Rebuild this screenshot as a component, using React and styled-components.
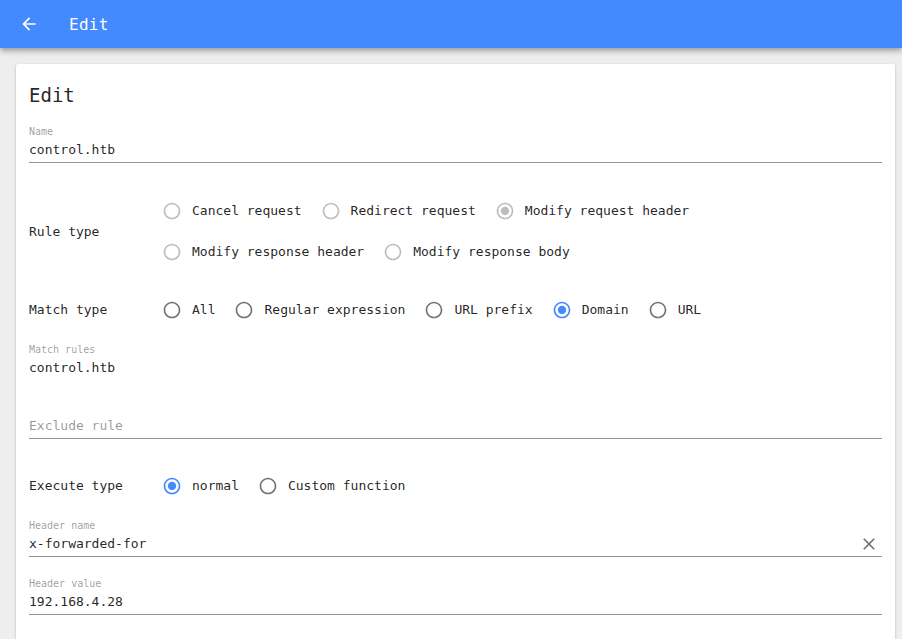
import React from 'react'
import styled, { createGlobalStyle } from 'styled-components'

const GlobalStyle = createGlobalStyle`
    body {
        margin: 0;
        background: #eeeeee;
        font-family: "DejaVu Sans Mono", "Liberation Mono", monospace;
        color: rgba(0, 0, 0, 0.87);
    }
`

const AppBar = styled.header`
    height: 48px;
    background: #448aff;
    display: flex;
    align-items: center;
    padding-left: 19px;
    box-shadow: 0 2px 4px -1px rgba(0,0,0,0.2), 0 4px 5px 0 rgba(0,0,0,0.14), 0 1px 10px 0 rgba(0,0,0,0.12);
    position: relative;
    z-index: 1;
`

const BackButton = styled.button`
    width: 20px;
    height: 20px;
    padding: 0;
    border: 0;
    background: none;
    display: flex;
    color: #fff;
    cursor: pointer;
`

const BarTitle = styled.h1`
    margin: 0 0 0 30px;
    font-size: 16px;
    font-weight: normal;
    color: #fff;
    letter-spacing: 0.3px;
`

const Card = styled.main`
    margin: 16px 7px 0 16px;
    padding: 19px 13px 40px;
    background: #fff;
    border-radius: 2px;
    box-shadow: 0 1px 3px 0 rgba(0,0,0,0.2), 0 1px 1px 0 rgba(0,0,0,0.14), 0 2px 1px -1px rgba(0,0,0,0.12);
    display: flex;
    flex-direction: column;
`

const Title = styled.h2`
    margin: 0;
    font-size: 19px;
    line-height: 24px;
    font-weight: normal;
`

const Field = styled.div`
    margin-top: ${p => p.$top}px;
    display: flex;
    flex-direction: column;
`

const FieldLabel = styled.label`
    font-size: 10px;
    line-height: 12px;
    color: rgba(0, 0, 0, 0.4);
`

const InputRow = styled.div`
    margin-top: ${p => (p.$noLabel ? 0 : 3)}px;
    padding-bottom: ${p => (p.$line ? 3 : 0)}px;
    border-bottom: ${p => (p.$line ? '1px solid rgba(0,0,0,0.42)' : '0')};
    display: flex;
    align-items: center;
`

const Value = styled.span`
    flex: 1;
    font-size: 13px;
    line-height: 18px;
    color: ${p => (p.$placeholder ? 'rgba(0,0,0,0.42)' : 'rgba(0,0,0,0.87)')};
`

const ClearButton = styled.button`
    width: 20px;
    height: 18px;
    padding: 0;
    margin-right: 3px;
    border: 0;
    background: none;
    display: flex;
    align-items: center;
    color: rgba(0, 0, 0, 0.54);
`

const RadioSection = styled.div`
    margin-top: ${p => p.$top}px;
    display: flex;
    align-items: center;
`

const SectionLabel = styled.div`
    width: 133px;
    flex: none;
    font-size: 13px;
`

const RadioRows = styled.div`
    display: flex;
    flex-direction: column;
`

const RadioRow = styled.div`
    height: 41px;
    display: flex;
    align-items: center;
    gap: 19px;
`

const RadioItem = styled.label`
    display: flex;
    align-items: center;
    gap: 10px;
    font-size: 13px;
    color: rgba(0, 0, 0, 0.87);
`

const RadioIcon = styled.svg`
    width: 20px;
    height: 20px;
    flex: none;
    fill: ${p => (p.$disabled ? 'rgba(0,0,0,0.26)' : p.$checked ? '#448aff' : 'rgba(0,0,0,0.54)')};
`

const Radio = ({ label, checked, disabled }) => (
    <RadioItem>
        <RadioIcon viewBox="0 0 24 24" $checked={checked} $disabled={disabled}>
            <path d="M12 2C6.48 2 2 6.48 2 12s4.48 10 10 10 10-4.48 10-10S17.52 2 12 2zm0 18c-4.42 0-8-3.58-8-8s3.58-8 8-8 8 3.58 8 8-3.58 8-8 8z" />
            {checked && <path d="M12 7c-2.76 0-5 2.24-5 5s2.24 5 5 5 5-2.24 5-5-2.24-5-5-5z" />}
        </RadioIcon>
        {label}
    </RadioItem>
)

export default function App() {
    return (
        <>
            <GlobalStyle />
            <AppBar>
                <BackButton>
                    <svg viewBox="0 0 24 24" width="20" height="20" fill="currentColor">
                        <path d="M20 11H7.83l5.59-5.59L12 4l-8 8 8 8 1.41-1.41L7.83 13H20v-2z" />
                    </svg>
                </BackButton>
                <BarTitle>Edit</BarTitle>
            </AppBar>
            <Card>
                <Title>Edit</Title>

                <Field $top={19}>
                    <FieldLabel>Name</FieldLabel>
                    <InputRow $line>
                        <Value>control.htb</Value>
                    </InputRow>
                </Field>

                <RadioSection $top={27}>
                    <SectionLabel>Rule type</SectionLabel>
                    <RadioRows>
                        <RadioRow>
                            <Radio label="Cancel request" disabled />
                            <Radio label="Redirect request" disabled />
                            <Radio label="Modify request header" disabled checked />
                        </RadioRow>
                        <RadioRow>
                            <Radio label="Modify response header" disabled />
                            <Radio label="Modify response body" disabled />
                        </RadioRow>
                    </RadioRows>
                </RadioSection>

                <RadioSection $top={17}>
                    <SectionLabel>Match type</SectionLabel>
                    <RadioRow>
                        <Radio label="All" />
                        <Radio label="Regular expression" />
                        <Radio label="URL prefix" />
                        <Radio label="Domain" checked />
                        <Radio label="URL" />
                    </RadioRow>
                </RadioSection>

                <Field $top={14}>
                    <FieldLabel>Match rules</FieldLabel>
                    <InputRow>
                        <Value>control.htb</Value>
                    </InputRow>
                </Field>

                <Field $top={40}>
                    <InputRow $line $noLabel>
                        <Value $placeholder>Exclude rule</Value>
                    </InputRow>
                </Field>

                <RadioSection $top={26}>
                    <SectionLabel>Execute type</SectionLabel>
                    <RadioRow>
                        <Radio label="normal" checked />
                        <Radio label="Custom function" />
                    </RadioRow>
                </RadioSection>

                <Field $top={14}>
                    <FieldLabel>Header name</FieldLabel>
                    <InputRow $line>
                        <Value>x-forwarded-for</Value>
                        <ClearButton>
                            <svg viewBox="0 0 24 24" width="20" height="20" fill="currentColor">
                                <path d="M19 6.41L17.59 5 12 10.59 6.41 5 5 6.41 10.59 12 5 17.59 6.41 19 12 13.41 17.59 19 19 17.59 13.41 12z" />
                            </svg>
                        </ClearButton>
                    </InputRow>
                </Field>

                <Field $top={21}>
                    <FieldLabel>Header value</FieldLabel>
                    <InputRow $line>
                        <Value>192.168.4.28</Value>
                    </InputRow>
                </Field>
            </Card>
        </>
    )
}
